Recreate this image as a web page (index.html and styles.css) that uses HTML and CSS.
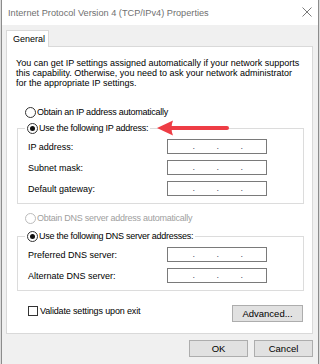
FILE: index.html
```html
<!DOCTYPE html>
<html>
	<head>
		<meta charset="utf-8">
		<title>Internet Protocol Version 4 (TCP/IPv4) Properties</title>
		<link rel="stylesheet" href="styles.css">
	</head>
	<body>
		<div class="window">
			<div class="titlebar">
				<span class="title">Internet Protocol Version 4 (TCP/IPv4) Properties</span>
				<svg class="close" width="10" height="10" viewBox="0 0 10 10">
					<path d="M0.5 0.5 L9.5 9.5 M9.5 0.5 L0.5 9.5" stroke="#7a7a7a" stroke-width="1" fill="none"/>
				</svg>
			</div>
			<div class="client">
				<div class="tabs">
					<div class="tab">General</div>
				</div>
				<div class="panel">
					<p class="intro">You can get IP settings assigned automatically if your network supports<br>this capability. Otherwise, you need to ask your network administrator<br>for the appropriate IP settings.</p>

					<label class="option first">
						<input type="radio" name="ip">
						<span>Obtain an IP address automatically</span>
					</label>
					<div class="group ipgroup">
						<label class="option legend">
							<input type="radio" name="ip" checked>
							<span>Use the following IP address:</span>
						</label>
						<div class="row">
							<span>IP address:</span>
							<div class="ipbox"><span>.</span><span>.</span><span>.</span></div>
						</div>
						<div class="row">
							<span>Subnet mask:</span>
							<div class="ipbox"><span>.</span><span>.</span><span>.</span></div>
						</div>
						<div class="row">
							<span>Default gateway:</span>
							<div class="ipbox"><span>.</span><span>.</span><span>.</span></div>
						</div>
					</div>

					<label class="option dnsauto disabled">
						<input type="radio" name="dns" disabled>
						<span>Obtain DNS server address automatically</span>
					</label>
					<div class="group dnsgroup">
						<label class="option legend">
							<input type="radio" name="dns" checked>
							<span>Use the following DNS server addresses:</span>
						</label>
						<div class="row">
							<span>Preferred DNS server:</span>
							<div class="ipbox"><span>.</span><span>.</span><span>.</span></div>
						</div>
						<div class="row">
							<span>Alternate DNS server:</span>
							<div class="ipbox"><span>.</span><span>.</span><span>.</span></div>
						</div>
					</div>

					<div class="bottom">
						<label class="check">
							<input type="checkbox">
							<span>Validate settings upon exit</span>
						</label>
						<button class="btn advanced">Advanced...</button>
					</div>

					<!-- red pointer added on the screenshot -->
					<svg class="pointer" width="76" height="22" viewBox="0 0 76 22">
						<path d="M14 10 L72 10" stroke="#ee3d45" stroke-width="4" stroke-linecap="round"/>
						<path d="M2 10 L18 2.5 Q15 10 18 17.5 Z" fill="#ee3d45"/>
					</svg>
				</div>
				<div class="actions">
					<button class="btn">OK</button>
					<button class="btn">Cancel</button>
				</div>
			</div>
		</div>
	</body>
</html>
```
FILE: styles.css
```css
*{box-sizing: border-box;}
html,body{
	margin: 0;
	height: 100%;
}
body{
	background-color: #dcdcdc;
	font-family: "Liberation Sans", Arial, sans-serif;
	font-size: 9px;
	color: #000;
}
.window{
	width: 318px;
	height: 364px;
	margin-left: 1px;
	border-left: 1px solid #8c8c8c;
	border-right: 1px solid #8c8c8c;
	background-color: #f0f0f0;
	display: flex;
	flex-direction: column;
}
.titlebar{
	height: 25px;
	background-color: #fff;
	display: flex;
	align-items: center;
	justify-content: space-between;
	padding: 0 6px 0 6px;
}
.title{
	color: #707070;
	font-size: 9.2px;
}
.close{margin-bottom: 1px;}
.client{
	flex: 1;
	padding: 5px 5px 0 4px;
}
.tabs{display: flex;}
.tab{
	position: relative;
	z-index: 1;
	width: 43px;
	height: 17px;
	margin-bottom: -1px;
	padding-left: 6px;
	line-height: 16px;
	background-color: #fff;
	border: 1px solid #d9d9d9;
	border-bottom: none;
}
.panel{
	position: relative;
	height: 288px;
	padding: 0 8px 0 9px;
	background-color: #fff;
	border: 1px solid #d9d9d9;
	display: flex;
	flex-direction: column;
}
.intro{
	margin: 11px 0 0 0;
	line-height: 10px;
	white-space: nowrap;
}
.option{
	display: flex;
	align-items: center;
	height: 12px;
	width: fit-content;
	letter-spacing: -0.25px;
}
.option span{margin-left: 1px;}
.first{margin: 18px 0 0 9px;}
.dnsauto{margin: 8px 0 0 9px;}
.disabled{color: #a0a0a0;}
input[type=radio]{
	appearance: none;
	margin: 0;
	width: 11px;
	height: 11px;
	border: 1px solid #333;
	border-radius: 50%;
	background-color: #fff;
	display: flex;
	align-items: center;
	justify-content: center;
}
input[type=radio]:checked::after{
	content: "";
	width: 5px;
	height: 5px;
	border-radius: 50%;
	background-color: #111;
}
input[type=radio]:disabled{border-color: #bcbcbc;}
.group{
	border: 1px solid #dcdcdc;
	padding: 0 0 7px 10px;
	display: flex;
	flex-direction: column;
	gap: 6px;
}
.ipgroup{margin: 10px 0 0 1px;}
.dnsgroup{margin: 12px 0 0 1px;}
.legend{
	margin: -7px 0 -1px -3px;
	padding: 0 2px;
	background-color: #fff;
}
.row{
	display: grid;
	grid-template-columns: 139px 100px;
	align-items: center;
	height: 15px;
}
.ipbox{
	height: 15px;
	border: 1px solid #7a7a7a;
	display: flex;
	padding-left: 3px;
	line-height: 13px;
	color: #4a4a6a;
}
.ipbox span{
	width: 24px;
	text-align: right;
}
.bottom{
	margin-top: 14px;
	display: flex;
	justify-content: space-between;
	align-items: flex-start;
}
.check{
	display: flex;
	align-items: center;
	margin-left: 12px;
	height: 11px;
	letter-spacing: -0.15px;
}
input[type=checkbox]{
	appearance: none;
	margin: 0 2px 0 0;
	width: 10px;
	height: 10px;
	border: 1px solid #333;
	background-color: #fff;
}
.btn{
	font-family: inherit;
	font-size: 9.5px;
	height: 17px;
	padding: 0;
	background-color: #e1e1e1;
	border: 1px solid #adadad;
	color: #000;
}
.advanced{
	width: 71px;
	margin-right: 1px;
}
.actions{
	display: flex;
	justify-content: flex-end;
	gap: 6px;
	margin-top: 6px;
}
.actions .btn{width: 59px;}
.pointer{
	position: absolute;
	left: 148px;
	top: 71px;
}
```
